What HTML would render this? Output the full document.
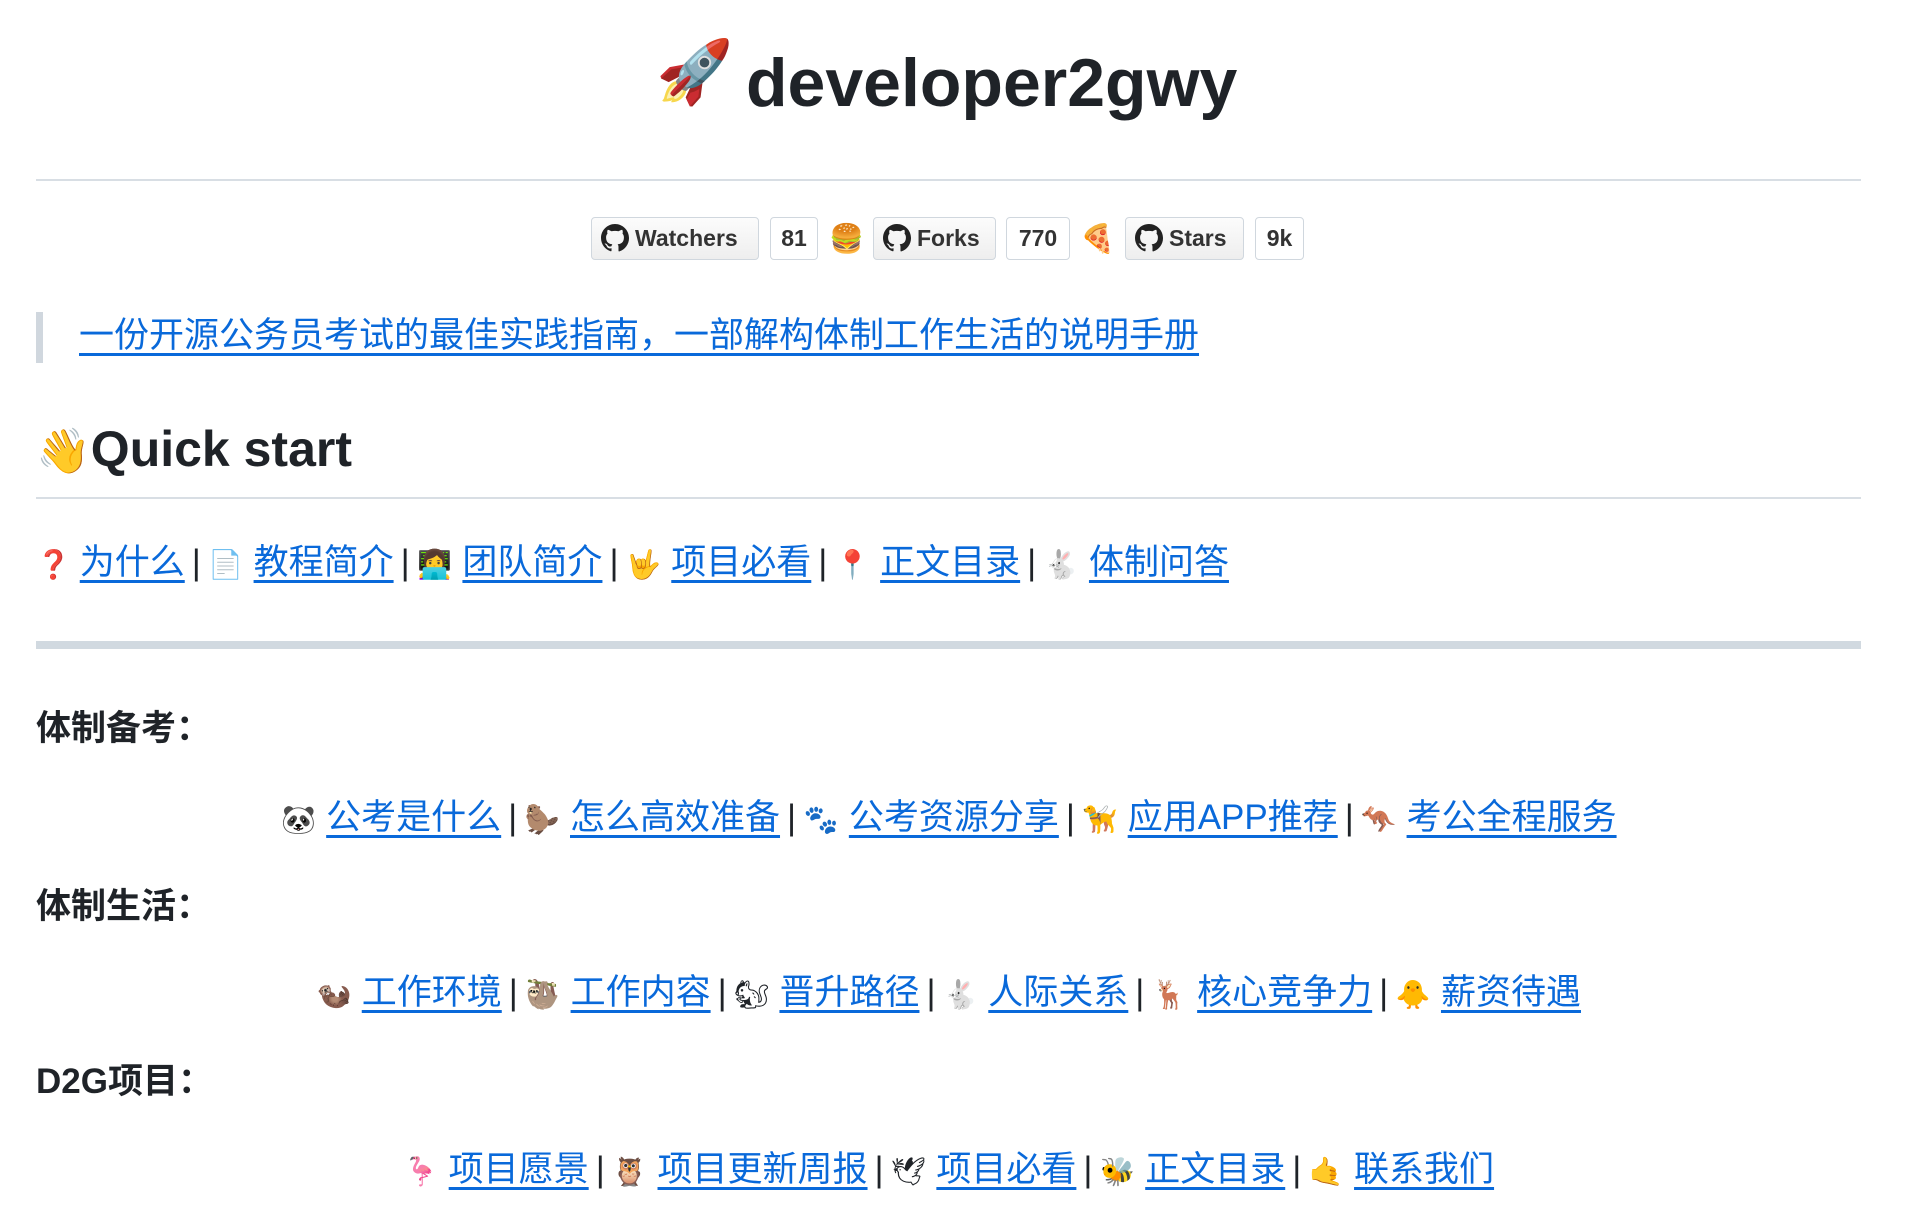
<!DOCTYPE html>
<html><head><meta charset="utf-8"><style>
*{margin:0;padding:0;box-sizing:border-box}
body{width:1920px;height:1218px;background:#fff;color:#1f2328;font-family:"Liberation Sans","Noto Sans CJK SC",sans-serif;position:relative;overflow:hidden}
.abs{position:absolute}
a{color:#0969da;text-decoration:underline;text-underline-offset:6px;text-decoration-thickness:3px}
.row{position:absolute;left:36px;width:1825px;font-size:35px;line-height:44px;white-space:nowrap}
.c{text-align:center}
.e{font-size:28px;display:inline-block;width:36px;text-align:center}
.sep{margin:0 7px}
.hr{position:absolute;left:36px;width:1825px;background:#d8dee4}
.b{position:absolute;top:217px;height:43px;border:1px solid #d0d7de;border-radius:4px;font-weight:bold;font-size:23px;line-height:41px;color:#333;background:linear-gradient(#fcfcfc,#eee)}
.cnt{background:#fff;text-align:center}
.gh{display:inline-block;width:28px;height:28px;vertical-align:-6px;margin:0 6px 0 9px}
.lbl{font-weight:bold;font-size:35px;position:absolute;left:36px;line-height:44px}
</style></head><body>
<div class="abs" style="left:656px;top:33px;font-size:62px;line-height:80px">🚀</div>
<div class="abs" style="left:746px;top:41px;font-size:68px;font-weight:bold;line-height:84px">developer2gwy</div>
<div class="hr" style="top:179px;height:2px"></div>

<div class="b" style="left:591px;width:168px"><svg class="gh" viewBox="0 0 16 16"><path fill="#222" d="M8 0C3.58 0 0 3.58 0 8c0 3.54 2.29 6.53 5.47 7.59.4.07.55-.17.55-.38v-1.33c-2.23.48-2.7-1.07-2.7-1.07-.36-.92-.89-1.17-.89-1.17-.73-.5.05-.49.05-.49.8.06 1.23.82 1.23.82.72 1.22 1.87.87 2.33.67.07-.52.28-.87.51-1.07-1.78-.2-3.65-.89-3.65-3.95 0-.87.31-1.59.82-2.15-.08-.2-.36-1.02.08-2.12 0 0 .67-.21 2.2.82a7.6 7.6 0 014 0c1.53-1.04 2.2-.82 2.2-.82.44 1.1.16 1.92.08 2.12.51.56.82 1.27.82 2.15 0 3.07-1.87 3.75-3.65 3.95.29.25.54.73.54 1.48v2.2c0 .21.15.46.55.38A8.01 8.01 0 0016 8c0-4.42-3.58-8-8-8z"/></svg>Watchers</div>
<div class="b cnt" style="left:770px;width:48px">81</div>
<div class="abs" style="left:829px;top:222px;font-size:28px">🍔</div>
<div class="b" style="left:873px;width:123px"><svg class="gh" viewBox="0 0 16 16"><path fill="#222" d="M8 0C3.58 0 0 3.58 0 8c0 3.54 2.29 6.53 5.47 7.59.4.07.55-.17.55-.38v-1.33c-2.23.48-2.7-1.07-2.7-1.07-.36-.92-.89-1.17-.89-1.17-.73-.5.05-.49.05-.49.8.06 1.23.82 1.23.82.72 1.22 1.87.87 2.33.67.07-.52.28-.87.51-1.07-1.78-.2-3.65-.89-3.65-3.95 0-.87.31-1.59.82-2.15-.08-.2-.36-1.02.08-2.12 0 0 .67-.21 2.2.82a7.6 7.6 0 014 0c1.53-1.04 2.2-.82 2.2-.82.44 1.1.16 1.92.08 2.12.51.56.82 1.27.82 2.15 0 3.07-1.87 3.75-3.65 3.95.29.25.54.73.54 1.48v2.2c0 .21.15.46.55.38A8.01 8.01 0 0016 8c0-4.42-3.58-8-8-8z"/></svg>Forks</div>
<div class="b cnt" style="left:1006px;width:64px">770</div>
<div class="abs" style="left:1080px;top:222px;font-size:28px">🍕</div>
<div class="b" style="left:1125px;width:119px"><svg class="gh" viewBox="0 0 16 16"><path fill="#222" d="M8 0C3.58 0 0 3.58 0 8c0 3.54 2.29 6.53 5.47 7.59.4.07.55-.17.55-.38v-1.33c-2.23.48-2.7-1.07-2.7-1.07-.36-.92-.89-1.17-.89-1.17-.73-.5.05-.49.05-.49.8.06 1.23.82 1.23.82.72 1.22 1.87.87 2.33.67.07-.52.28-.87.51-1.07-1.78-.2-3.65-.89-3.65-3.95 0-.87.31-1.59.82-2.15-.08-.2-.36-1.02.08-2.12 0 0 .67-.21 2.2.82a7.6 7.6 0 014 0c1.53-1.04 2.2-.82 2.2-.82.44 1.1.16 1.92.08 2.12.51.56.82 1.27.82 2.15 0 3.07-1.87 3.75-3.65 3.95.29.25.54.73.54 1.48v2.2c0 .21.15.46.55.38A8.01 8.01 0 0016 8c0-4.42-3.58-8-8-8z"/></svg>Stars</div>
<div class="b cnt" style="left:1255px;width:49px">9k</div>

<div class="abs" style="left:36px;top:312px;width:7px;height:51px;background:#d0d7de"></div>
<div class="row" style="top:314px;left:79px"><a>一份开源公务员考试的最佳实践指南，一部解构体制工作生活的说明手册</a></div>

<div class="abs" style="left:36px;top:419px;font-size:50px;font-weight:bold;line-height:60px"><span style="font-size:44px">👋</span>Quick start</div>
<div class="hr" style="top:497px;height:2px"></div>

<div class="row" style="top:541px"><span class="e" style="color:#d00;width:34px">❓</span> <a>为什么</a><span class="sep">|</span><span class="e">📄</span> <a>教程简介</a><span class="sep">|</span><span class="e">👩‍💻</span> <a>团队简介</a><span class="sep">|</span><span class="e">🤟</span> <a>项目必看</a><span class="sep">|</span><span class="e">📍</span> <a>正文目录</a><span class="sep">|</span><span class="e">🐇</span> <a>体制问答</a></div>

<div class="hr" style="top:641px;height:8px;background:#d1d9e0"></div>

<div class="lbl" style="top:707px">体制备考：</div>
<div class="row c" style="top:796px"><span class="e">🐼</span> <a>公考是什么</a><span class="sep">|</span><span class="e">🦫</span> <a>怎么高效准备</a><span class="sep">|</span><span class="e">🐾</span> <a>公考资源分享</a><span class="sep">|</span><span class="e">🦮</span> <a>应用APP推荐</a><span class="sep">|</span><span class="e">🦘</span> <a>考公全程服务</a></div>

<div class="lbl" style="top:885px">体制生活：</div>
<div class="row c" style="top:971px"><span class="e">🦦</span> <a>工作环境</a><span class="sep">|</span><span class="e">🦥</span> <a>工作内容</a><span class="sep">|</span><span class="e">🐿</span> <a>晋升路径</a><span class="sep">|</span><span class="e">🐇</span> <a>人际关系</a><span class="sep">|</span><span class="e">🦌</span> <a>核心竞争力</a><span class="sep">|</span><span class="e">🐥</span> <a>薪资待遇</a></div>

<div class="lbl" style="top:1060px">D2G项目：</div>
<div class="row c" style="top:1148px"><span class="e">🦩</span> <a>项目愿景</a><span class="sep">|</span><span class="e">🦉</span> <a>项目更新周报</a><span class="sep">|</span><span class="e">🕊</span> <a>项目必看</a><span class="sep">|</span><span class="e">🐝</span> <a>正文目录</a><span class="sep">|</span><span class="e">🤙</span> <a>联系我们</a></div>
</body></html>
